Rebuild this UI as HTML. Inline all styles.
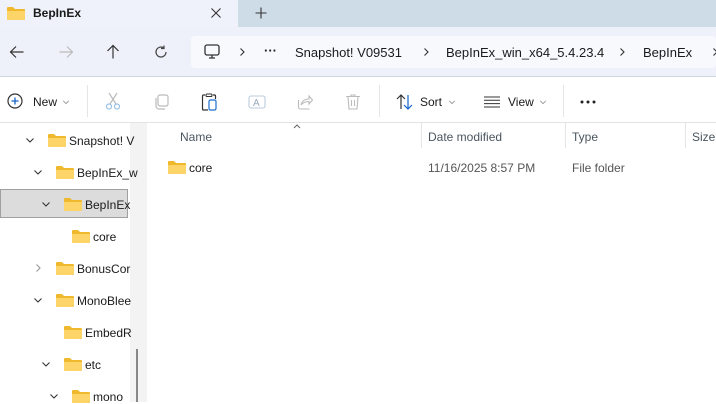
<!DOCTYPE html><html><head><style>
body{margin:0;width:716px;height:402px;overflow:hidden;font-family:"Liberation Sans",sans-serif;background:#fff;position:relative;color:#1a1a1a}
.a{position:absolute}
.t{font-size:12px;position:absolute;white-space:nowrap}
svg{position:absolute}
</style></head><body>
<div class="a" style="left:0;top:0;width:716px;height:27px;background:#cedce8"></div>
<div class="a" style="left:0;top:0;width:238px;height:28px;background:#eff2fa"></div>
<div class="a" style="left:0;top:27px;width:716px;height:49px;background:#eef1f9"></div>
<div class="a" style="left:191px;top:36px;width:525px;height:32px;background:#f8f9fd;border-radius:4px"></div>
<div class="a" style="left:0;top:76px;width:716px;height:1px;background:#d0d6e0"></div>
<div class="a" style="left:0;top:122px;width:716px;height:1px;background:#e3e3e3"></div>
<div class="a" style="left:130px;top:123px;width:17px;height:279px;background:#f3f3f3"></div>
<div class="a" style="left:136px;top:349px;width:2px;height:53px;background:#888"></div>

<svg width="0" height="0"><defs><symbol id="fd" viewBox="0 0 18 14"><path d="M0 2a1 1 0 0 1 1-1h5l2 2h9a1 1 0 0 1 1 1v9a1 1 0 0 1-1 1H1a1 1 0 0 1-1-1z" fill="#f0b82c"/><path d="M0 5h18v8a1 1 0 0 1-1 1H1a1 1 0 0 1-1-1z" fill="#fcd467"/></symbol>
<symbol id="dn" viewBox="0 0 10 10"><path d="M1.5 3.5L5 7l3.5-3.5" fill="none" stroke="#333" stroke-width="1.1"/></symbol>
<symbol id="rt" viewBox="0 0 10 10"><path d="M3.5 1.5L7 5l-3.5 3.5" fill="none" stroke="#333" stroke-width="1.1"/></symbol></defs></svg>

<svg width="18" height="14" style="left:7px;top:6px"><use href="#fd"/></svg>
<div class="t" style="left:33px;top:6px;font-weight:bold">BepInEx</div>
<svg width="12" height="12" style="left:210px;top:7px" viewBox="0 0 12 12"><path d="M1.5 1.5l9 9M10.5 1.5l-9 9" stroke="#333" stroke-width="1.1"/></svg>
<svg width="12" height="12" style="left:255px;top:7px" viewBox="0 0 12 12"><path d="M6 0.5v11M0.5 6h11" stroke="#333" stroke-width="1.1"/></svg>

<svg width="16" height="16" style="left:9px;top:44px" viewBox="0 0 16 16"><path d="M14.5 8H1.5M7 2.5L1.5 8 7 13.5" fill="none" stroke="#333" stroke-width="1.2"/></svg>
<svg width="16" height="16" style="left:58px;top:44px" viewBox="0 0 16 16"><path d="M1.5 8h13M9 2.5L14.5 8 9 13.5" fill="none" stroke="#bbb" stroke-width="1.2"/></svg>
<svg width="16" height="16" style="left:105px;top:44px" viewBox="0 0 16 16"><path d="M8 14.5V1.5M2.5 7L8 1.5 13.5 7" fill="none" stroke="#333" stroke-width="1.2"/></svg>
<svg width="16" height="16" style="left:153px;top:44px" viewBox="0 0 16 16"><path d="M13 8a5 5 0 1 1-2-4M11 1.5v3h-3" fill="none" stroke="#444" stroke-width="1.2"/></svg>
<svg width="16" height="16" style="left:204px;top:44px" viewBox="0 0 16 16"><rect x="1" y="1" width="14" height="10" rx="2" fill="none" stroke="#333" stroke-width="1.3"/><path d="M5 14h6M8 11v3" stroke="#333" stroke-width="1.3"/></svg>
<svg width="10" height="10" style="left:237px;top:47px"><use href="#rt"/></svg>
<div class="t" style="left:264px;top:43px;font-size:13px;font-weight:bold">···</div>
<div class="t" style="left:295px;top:45px;font-size:13px">Snapshot! V09531</div>
<svg width="10" height="10" style="left:421px;top:47px"><use href="#rt"/></svg>
<div class="t" style="left:446px;top:45px;font-size:13px">BepInEx_win_x64_5.4.23.4</div>
<svg width="10" height="10" style="left:617px;top:47px"><use href="#rt"/></svg>
<div class="t" style="left:643px;top:45px;font-size:13px">BepInEx</div>
<svg width="10" height="10" style="left:710px;top:47px"><use href="#rt"/></svg>

<svg width="16" height="16" style="left:7px;top:93px" viewBox="0 0 16 16"><circle cx="8" cy="8" r="7" fill="none" stroke="#333" stroke-width="1.2"/><path d="M8 4.5v7M4.5 8h7" stroke="#1464c8" stroke-width="1.3"/></svg>
<div class="t" style="left:33px;top:95px">New</div>
<svg width="8" height="8" style="left:62px;top:98px"><use href="#dn" style="opacity:.5"/></svg>
<div class="a" style="left:87px;top:85px;width:1px;height:32px;background:#e5e5e5"></div>
<svg width="16" height="18" style="left:105px;top:92px" viewBox="0 0 16 18"><path d="M4 1l7 11M12 1L5 12" stroke="#bbb" stroke-width="1.2" fill="none"/><circle cx="4" cy="14.5" r="2.5" fill="none" stroke="#9bc0e4" stroke-width="1.2"/><circle cx="12" cy="14.5" r="2.5" fill="none" stroke="#9bc0e4" stroke-width="1.2"/></svg>
<svg width="16" height="16" style="left:153px;top:94px" viewBox="0 0 16 16"><rect x="5" y="1" width="10" height="11" rx="2" fill="none" stroke="#bbb" stroke-width="1.2"/><path d="M3 4v8a3 3 0 0 0 3 3h6" fill="none" stroke="#bbb" stroke-width="1.2"/></svg>
<svg width="16" height="18" style="left:201px;top:93px" viewBox="0 0 16 18"><path d="M4 2H2.5a1 1 0 0 0-1 1v13a1 1 0 0 0 1 1H7M12 2h1.5a1 1 0 0 1 1 1v3" fill="none" stroke="#333" stroke-width="1.2"/><rect x="5" y="1" width="6" height="2.5" rx="1" fill="none" stroke="#333" stroke-width="1.1"/><rect x="8" y="7" width="7" height="10" rx="1.5" fill="#fff" stroke="#1a6fd0" stroke-width="1.2"/></svg>
<svg width="18" height="18" style="left:248px;top:93px" viewBox="0 0 18 18"><rect x="1" y="3" width="16" height="12" rx="2" fill="none" stroke="#bcd" stroke-width="1.1"/><text x="5" y="13" font-size="10" fill="#9ab" font-family="Liberation Sans">A</text></svg>
<svg width="16" height="16" style="left:297px;top:94px" viewBox="0 0 16 16"><path d="M1.5 6v7a2 2 0 0 0 2 2h9M4 11c1-4 4-6 8-6V2l3.5 4L12 10V7.5C9 7.5 6 8.5 4 11z" fill="none" stroke="#bbb" stroke-width="1.1"/></svg>
<svg width="16" height="18" style="left:345px;top:93px" viewBox="0 0 16 18"><path d="M1 3.5h14M6 3.5V2h4v1.5M3 3.5l1 12.5h8l1-12.5M6.5 7v6M9.5 7v6" fill="none" stroke="#bbb" stroke-width="1.1"/></svg>
<div class="a" style="left:379px;top:85px;width:1px;height:32px;background:#e5e5e5"></div>
<svg width="18" height="16" style="left:396px;top:94px" viewBox="0 0 18 16"><path d="M5 15V1M1 5l4-4 4 4" fill="none" stroke="#333" stroke-width="1.2"/><path d="M12 1v14M8 11l4 4 4-4" fill="none" stroke="#1464c8" stroke-width="1.2"/></svg>
<div class="t" style="left:420px;top:95px">Sort</div>
<svg width="8" height="8" style="left:448px;top:98px"><use href="#dn" style="opacity:.5"/></svg>
<svg width="16" height="12" style="left:484px;top:96px" viewBox="0 0 16 12"><path d="M0 1h16M0 4.3h16M0 7.6h16M0 11h16" stroke="#333" stroke-width="1"/></svg>
<div class="t" style="left:508px;top:95px">View</div>
<svg width="8" height="8" style="left:539px;top:98px"><use href="#dn" style="opacity:.5"/></svg>
<div class="a" style="left:563px;top:85px;width:1px;height:32px;background:#e5e5e5"></div>
<svg width="16" height="4" style="left:580px;top:100px"><circle cx="2" cy="2" r="1.5" fill="#222"/><circle cx="8" cy="2" r="1.5" fill="#222"/><circle cx="14" cy="2" r="1.5" fill="#222"/></svg>

<svg width="8" height="6" style="left:293px;top:123px" viewBox="0 0 8 6"><path d="M1 5l3-3 3 3" fill="none" stroke="#666"/></svg>
<div class="t" style="left:180px;top:130px;color:#4a5560">Name</div>
<div class="a" style="left:421px;top:123px;width:1px;height:25px;background:#e5e5e5"></div>
<div class="t" style="left:428px;top:130px;color:#4a5560">Date modified</div>
<div class="a" style="left:565px;top:123px;width:1px;height:25px;background:#e5e5e5"></div>
<div class="t" style="left:572px;top:130px;color:#4a5560">Type</div>
<div class="a" style="left:685px;top:123px;width:1px;height:25px;background:#e5e5e5"></div>
<div class="t" style="left:692px;top:130px;color:#4a5560">Size</div>

<div class="a" style="left:0;top:189px;width:128px;height:29px;background:#dcdcdc;border:1px solid #a0a0a0;box-sizing:border-box"></div>

<svg width="18" height="14" style="left:168px;top:160px"><use href="#fd"/></svg>
<div class="t" style="left:189px;top:161px">core</div>
<div class="t" style="left:428px;top:161px;color:#555">11/16/2025 8:57 PM</div>
<div class="t" style="left:572px;top:161px;color:#555">File folder</div>

<svg width="10" height="10" style="left:25px;top:135px"><use href="#dn"/></svg>
<svg width="18" height="14" style="left:48px;top:133px"><use href="#fd"/></svg>
<div class="t" style="left:69px;top:134px">Snapshot! V</div>
<svg width="10" height="10" style="left:33px;top:167px"><use href="#dn"/></svg>
<svg width="18" height="14" style="left:56px;top:165px"><use href="#fd"/></svg>
<div class="t" style="left:77px;top:166px">BepInEx_w</div>
<svg width="10" height="10" style="left:41px;top:199px"><use href="#dn"/></svg>
<svg width="18" height="14" style="left:64px;top:197px"><use href="#fd"/></svg>
<div class="t" style="left:85px;top:198px">BepInEx</div>
<svg width="18" height="14" style="left:72px;top:229px"><use href="#fd"/></svg>
<div class="t" style="left:93px;top:230px">core</div>
<svg width="10" height="10" style="left:33px;top:263px"><use href="#rt" style="opacity:.5"/></svg>
<svg width="18" height="14" style="left:56px;top:261px"><use href="#fd"/></svg>
<div class="t" style="left:77px;top:262px">BonusCor</div>
<svg width="10" height="10" style="left:33px;top:295px"><use href="#dn"/></svg>
<svg width="18" height="14" style="left:56px;top:293px"><use href="#fd"/></svg>
<div class="t" style="left:77px;top:294px">MonoBlee</div>
<svg width="18" height="14" style="left:64px;top:325px"><use href="#fd"/></svg>
<div class="t" style="left:85px;top:326px">EmbedR</div>
<svg width="10" height="10" style="left:41px;top:359px"><use href="#dn"/></svg>
<svg width="18" height="14" style="left:64px;top:357px"><use href="#fd"/></svg>
<div class="t" style="left:85px;top:358px">etc</div>
<svg width="10" height="10" style="left:49px;top:391px"><use href="#dn"/></svg>
<svg width="18" height="14" style="left:72px;top:389px"><use href="#fd"/></svg>
<div class="t" style="left:93px;top:390px">mono</div>
</body></html>
